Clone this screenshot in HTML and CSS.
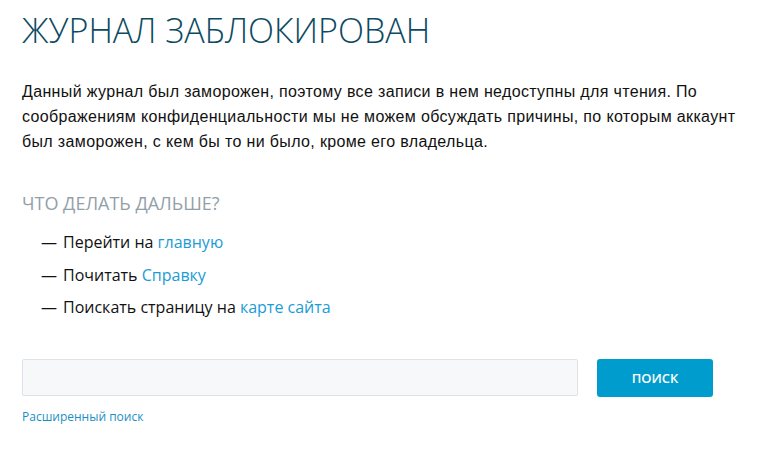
FILE: index.html
```html
<!DOCTYPE html>
<html lang="ru">
<head>
    <meta charset="UTF-8">
    <meta name="viewport" content="width=device-width, initial-scale=1.0">
    <title>Журнал заблокирован</title>
    <link rel="stylesheet" href="styles.css">
</head>
<body>
    <div class="page">
        <h1>Журнал заблокирован</h1>
        <p class="notice">Данный журнал был заморожен, поэтому все записи в нем недоступны для чтения. По соображениям конфиденциальности мы не можем обсуждать причины, по которым аккаунт был заморожен, с кем бы то ни было, кроме его владельца.</p>

        <h3>Что делать дальше?</h3>
        <ul class="next-steps">
            <li>Перейти на <a href="#">главную</a></li>
            <li>Почитать <a href="#">Справку</a></li>
            <li>Поискать страницу на <a href="#">карте сайта</a></li>
        </ul>

        <form class="search-form">
            <input type="text" class="search-input">
            <button type="submit" class="search-btn">Поиск</button>
        </form>
        <a href="#" class="advanced-link">Расширенный поиск</a>
    </div>
</body>
</html>
```

FILE: styles.css
```css
body {
    margin: 0;
    padding: 0;
    background: #fff;
    font-family: "Open Sans", Arial, sans-serif;
    color: #111;
}

.page {
    padding: 7px 22px 20px;
}

h1 {
    margin: 0;
    font-family: "Open Sans", sans-serif;
    font-weight: 300;
    font-size: 34px;
    line-height: 46px;
    color: #0b4a62;
    text-transform: uppercase;
}

.notice {
    margin: 26px 0 0;
    max-width: 730px;
    font-family: "Liberation Sans", Arial, sans-serif;
    font-size: 16px;
    letter-spacing: 0.35px;
    line-height: 25px;
}

h3 {
    margin: 37px 0 0;
    font-weight: 400;
    font-size: 18px;
    line-height: 24px;
    color: #939fa8;
    text-transform: uppercase;
}

.next-steps {
    list-style: none;
    margin: 11px 0 0;
    padding: 0 0 0 19px;
}

.next-steps li {
    font-size: 16px;
    line-height: 32.5px;
}

.next-steps li::before {
    content: "—";
    margin-right: 6px;
}

.next-steps a {
    color: #1a9cd6;
    text-decoration: none;
}

.search-form {
    display: flex;
    gap: 19px;
    margin-top: 35px;
}

.search-input {
    width: 556px;
    height: 37px;
    box-sizing: border-box;
    border: 1px solid #dde3e8;
    border-radius: 2px;
    background: #f7f8fa;
}

.search-btn {
    width: 116px;
    height: 38px;
    border: none;
    border-radius: 3px;
    background: #009ccd;
    color: #fff;
    font-family: "Open Sans", sans-serif;
    font-weight: 600;
    font-size: 13px;
    text-transform: uppercase;
}

.advanced-link {
    display: inline-block;
    margin-top: 11px;
    font-size: 12px;
    color: #1a8fc4;
    text-decoration: none;
}
```
